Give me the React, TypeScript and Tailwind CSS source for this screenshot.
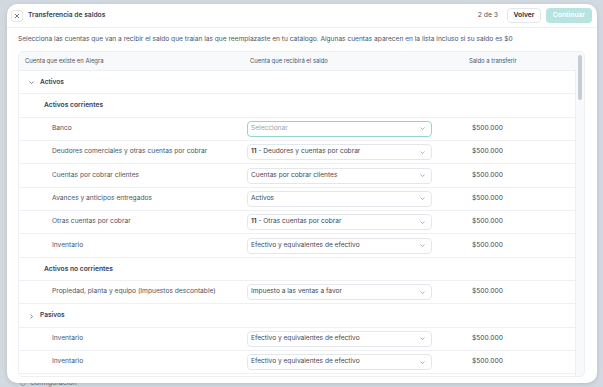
import React from "react";

const ChevronDown = ({ className = "" }: { className?: string }) => (
  <svg viewBox="0 0 10 10" className={className} fill="none" stroke="currentColor" strokeWidth="1.2" strokeLinecap="round" strokeLinejoin="round">
    <path d="M2.5 4 L5 6.5 L7.5 4" />
  </svg>
);
const ChevronRight = ({ className = "" }: { className?: string }) => (
  <svg viewBox="0 0 10 10" className={className} fill="none" stroke="currentColor" strokeWidth="1.2" strokeLinecap="round" strokeLinejoin="round">
    <path d="M4 2.5 L6.5 5 L4 7.5" />
  </svg>
);

type Row =
  | { kind: "group"; label: string; open: boolean }
  | { kind: "sub"; label: string }
  | { kind: "leaf"; label: string; code?: string; value: string; placeholder?: boolean };

const rows: Row[] = [
  { kind: "group", label: "Activos", open: true },
  { kind: "sub", label: "Activos corrientes" },
  { kind: "leaf", label: "Banco", value: "Seleccionar", placeholder: true },
  { kind: "leaf", label: "Deudores comerciales y otras cuentas por cobrar", code: "11", value: "Deudores y cuentas por cobrar" },
  { kind: "leaf", label: "Cuentas por cobrar clientes", value: "Cuentas por cobrar clientes" },
  { kind: "leaf", label: "Avances y anticipos entregados", value: "Activos" },
  { kind: "leaf", label: "Otras cuentas por cobrar", code: "11", value: "Otras cuentas por cobrar" },
  { kind: "leaf", label: "Inventario", value: "Efectivo y equivalentes de efectivo" },
  { kind: "sub", label: "Activos no corrientes" },
  { kind: "leaf", label: "Propiedad, planta y equipo (Impuestos descontable)", value: "Impuesto a las ventas a favor" },
  { kind: "group", label: "Pasivos", open: false },
  { kind: "leaf", label: "Inventario", value: "Efectivo y equivalentes de efectivo" },
  { kind: "leaf", label: "Inventario", value: "Efectivo y equivalentes de efectivo" },
];

function Select({ row }: { row: Extract<Row, { kind: "leaf" }> }) {
  return (
    <div
      className={
        "flex h-[16px] w-[185px] items-center justify-between rounded-[4px] border bg-white pl-[3px] pr-[5px] " +
        (row.placeholder ? "border-[#8fd6d1]" : "border-[#e3e7ec]")
      }
    >
      <span className={"text-[6.6px] " + (row.placeholder ? "text-[#9aa3ae]" : "text-[#3f4754]")}>
        {row.code && <span className="font-semibold text-[#1f2937]">{row.code}</span>}
        {row.code && " - "}
        {row.value}
      </span>
      <ChevronDown className="h-[7px] w-[7px] text-[#9aa3ae]" />
    </div>
  );
}

export default function App() {
  return (
    <div
      className="relative h-[387px] w-[603px] overflow-hidden bg-[#d3d9e1]"
      style={{ fontFamily: "Inter, 'Noto Sans', sans-serif" }}
    >
      {/* background page */}
      <div className="flex h-full w-full flex-col justify-end">
        <div className="flex items-center gap-[4px] pl-[20px] text-[7px] leading-[9px] text-[#6b7280]">
          <span className="h-[6px] w-[6px] rounded-full border border-[#9ca3af]" />
          <span>Configuración</span>
        </div>
      </div>

      {/* modal */}
      <div className="absolute left-[7px] top-[4px] flex h-[379px] w-[590px] flex-col overflow-hidden rounded-[10px] bg-white shadow-[0_1px_4px_rgba(15,23,42,0.15)]">
        {/* header */}
        <div className="flex h-[24px] shrink-0 items-center border-b border-[#eef1f4] pl-[4px] pr-[5px]">
          <div className="flex h-[12px] w-[12px] items-center justify-center rounded-[3px] border border-[#e5e8ec] text-[#4b5563]">
            <svg viewBox="0 0 10 10" className="h-[6px] w-[6px]" stroke="currentColor" strokeWidth="1.3" strokeLinecap="round">
              <path d="M2 2 L8 8 M8 2 L2 8" />
            </svg>
          </div>
          <span className="ml-[5px] text-[6.7px] font-semibold text-[#374151]">Transferencia de saldos</span>
          <div className="ml-auto flex items-center">
            <span className="text-[6.8px] text-[#4b5563]">2 de 3</span>
            <div className="ml-[9px] flex h-[15px] w-[34px] items-center justify-center rounded-[4px] border border-[#e3e7ec] text-[6.8px] font-semibold text-[#1f2937]">
              Volver
            </div>
            <div className="ml-[5px] flex h-[15px] w-[46px] items-center justify-center rounded-[4px] bg-[#b7e3e1] text-[6.8px] font-semibold text-white">
              Continuar
            </div>
          </div>
        </div>

        {/* body */}
        <div className="flex min-h-0 flex-1 flex-col pl-[11px] pr-[12px] pt-[6px]">
          <p className="text-[6.6px] leading-[10px] text-[#4b5563]">
            Selecciona las cuentas que van a recibir el saldo que traían las que reemplazaste en tu catálogo. Algunas cuentas aparecen en la lista incluso si su saldo es $0
          </p>

          <div className="mt-[7px] flex h-[326px] shrink-0 overflow-hidden rounded-[5px] border border-[#edf0f3] bg-[#f8f9fb]">
            <div className="flex min-w-0 flex-1 flex-col">
              <div className="grid h-[18px] shrink-0 grid-cols-[228px_222px_1fr] items-center pt-[1px] text-[5.9px] text-[#4b5563]">
                <span className="pl-[6px]">Cuenta que existe en Alegra</span>
                <span className="pl-[3px]">Cuenta que recibirá el saldo</span>
                <span>Saldo a transferir</span>
              </div>
              <div className="flex-1 overflow-hidden border-r border-t border-[#edf0f3] bg-white">
                {rows.map((r, i) => {
                  if (r.kind === "group") {
                    return (
                      <div key={i} className="flex h-[23.35px] items-center border-b border-[#eef0f3] pl-[9px] pt-[1px] text-[6.6px] font-semibold text-[#374151]">
                        {r.open ? (
                          <ChevronDown className="h-[7px] w-[7px] text-[#6b7280]" />
                        ) : (
                          <ChevronRight className="h-[7px] w-[7px] text-[#6b7280]" />
                        )}
                        <span className="ml-[5px]">{r.label}</span>
                      </div>
                    );
                  }
                  if (r.kind === "sub") {
                    return (
                      <div key={i} className="flex h-[23.35px] items-center border-b border-[#eef0f3] pl-[25px] text-[6.7px] font-semibold text-[#374151]">
                        {r.label}
                      </div>
                    );
                  }
                  return (
                    <div key={i} className="grid h-[23.35px] grid-cols-[228px_222px_1fr] items-center border-b border-[#eef0f3] text-[6.65px] text-[#4b5563]">
                      <span className="pl-[33px]">{r.label}</span>
                      <Select row={r} />
                      <span className="pl-[3px] text-[#3f4754]">$500.000</span>
                    </div>
                  );
                })}
                <div className="grid h-[23.35px] grid-cols-[228px_222px_1fr] items-center">
                  <span />
                  <div className="h-[16px] w-[185px] rounded-[4px] border border-[#e3e7ec] bg-white" />
                  <span />
                </div>
              </div>
            </div>
            <div className="flex w-[8px] shrink-0 justify-center pt-[3px]">
              <div className="h-[45px] w-[4px] rounded-full bg-[#c5ccd6]" />
            </div>
          </div>
        </div>
      </div>
    </div>
  );
}
